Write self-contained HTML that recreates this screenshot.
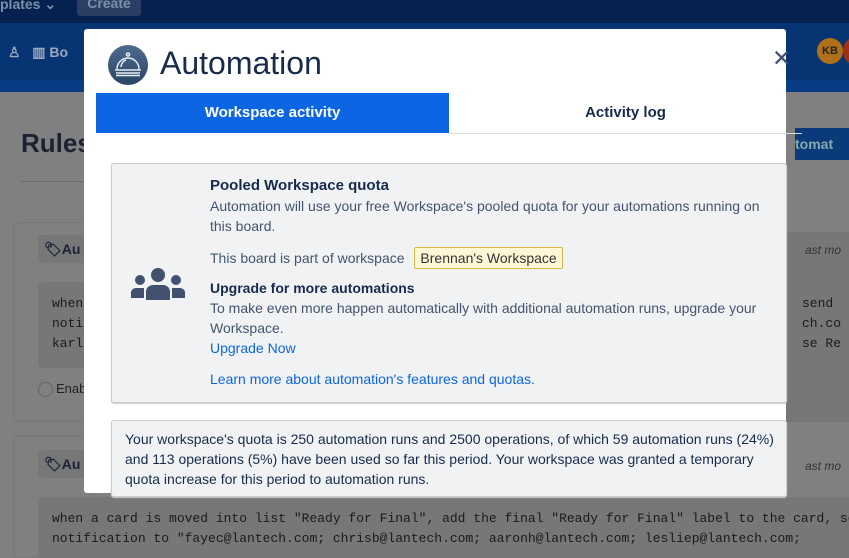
<!DOCTYPE html>
<html style="overflow:hidden"><head><style>
*{box-sizing:border-box;margin:0;padding:0}
html,body{width:849px;height:558px;overflow:hidden}
body{position:relative;background:#808080;font-family:"Liberation Sans",sans-serif}
.abs{position:absolute}
.mono{font-family:"Liberation Mono",monospace;font-size:13px;color:#1a1a1a;line-height:20px}
</style></head><body>
<div class="abs" style="left:0;top:0;width:849px;height:23px;background:#04214f"></div>
<div class="abs" style="left:0;top:-4px;color:#7f8fa8;font-size:14px;font-weight:bold">plates ⌄</div>
<div class="abs" style="left:77px;top:-6px;width:64px;height:22px;background:#2a3f63;border-radius:3px;color:#7f8fa8;font-size:14px;font-weight:bold;text-align:center;line-height:18px">Create</div>
<div class="abs" style="left:0;top:23px;width:849px;height:57px;background:#073472"></div>
<div class="abs" style="left:0;top:80px;width:849px;height:12px;background:#0a3b85"></div>
<div class="abs" style="left:8px;top:44px;color:#9aa8c0;font-size:14px;font-weight:bold">♙ &nbsp; ▥ Bo</div>
<div class="abs" style="left:817px;top:38px;width:26px;height:26px;border-radius:50%;background:#b07018;color:#222;font-size:11px;font-weight:bold;text-align:center;line-height:26px">KB</div>
<div class="abs" style="left:843px;top:38px;width:20px;height:26px;border-radius:50%;background:#a03010"></div>
<div class="abs" style="left:21px;top:128px;font-size:26px;font-weight:bold;color:#1a2233">Rules</div>
<div class="abs" style="left:21px;top:181px;width:70px;height:1px;background:#6a6a6a"></div>
<div class="abs" style="left:795px;top:128px;width:60px;height:32px;background:#0a3a7a;color:#8aa;font-weight:bold;font-size:14px;line-height:32px">tomat</div>
<div class="abs" style="left:13px;top:222px;width:80px;height:200px;border:1px solid #777;border-radius:4px"></div>
<div class="abs" style="left:38px;top:235px;width:60px;height:28px;background:#777;border-radius:4px;color:#1a2233;font-weight:bold;font-size:14px;line-height:28px;padding-left:6px">🏷Au</div>
<div class="abs" style="left:38px;top:282px;width:60px;height:86px;background:#777;border-radius:4px"></div>
<div class="abs mono" style="left:52px;top:294px">when<br>noti<br>karl</div>
<div class="abs" style="left:38px;top:382px;width:15px;height:15px;border:1px solid #666;border-radius:50%"></div>
<div class="abs" style="left:56px;top:381px;font-size:13px;color:#222">Enab</div>
<div class="abs" style="left:13px;top:436px;width:80px;height:122px;border:1px solid #777;border-radius:4px"></div>
<div class="abs" style="left:38px;top:450px;width:60px;height:28px;background:#777;border-radius:4px;color:#1a2233;font-weight:bold;font-size:14px;line-height:28px;padding-left:6px">🏷Au</div>
<div class="abs" style="left:38px;top:497px;width:820px;height:61px;background:#777;border-radius:4px 4px 0 0"></div>
<div class="abs mono" style="left:52px;top:509px;white-space:nowrap">when a card is moved into list "Ready for Final", add the final "Ready for Final" label to the card, se<br>notification to "fayec@lantech.com; chrisb@lantech.com; aaronh@lantech.com; lesliep@lantech.com;</div>
<div class="abs" style="left:785px;top:232px;width:70px;height:190px;background:#777"></div>
<div class="abs" style="left:805px;top:243px;font-size:12px;font-style:italic;color:#333">ast mo</div>
<div class="abs mono" style="left:802px;top:294px">send<br>ch.co<br>se Re</div>
<div class="abs" style="left:805px;top:459px;font-size:12px;font-style:italic;color:#333">ast mo</div>

<div class="abs" style="left:84px;top:29px;width:702px;height:464px;background:#fff;border-radius:3px"></div>
<svg class="abs" style="left:108px;top:45px" width="40" height="40" viewBox="0 0 40 40"><defs><linearGradient id="g" x1="0" y1="0" x2="0" y2="1"><stop offset="0" stop-color="#4c6b8e"/><stop offset="1" stop-color="#2c4566"/></linearGradient></defs><circle cx="20" cy="20" r="20" fill="url(#g)"/><g fill="none" stroke="#e8eef5" stroke-width="1.5"><circle cx="20" cy="9.5" r="1.5"/><path d="M9 24 A11 11 0 0 1 31 24"/><path d="M13 22 A7 8 0 0 1 18 15"/><line x1="7" y1="25" x2="33" y2="25"/><line x1="8" y1="28" x2="32" y2="28"/><line x1="8" y1="30.5" x2="32" y2="30.5"/></g></svg>
<div class="abs" style="left:160px;top:45px;font-size:32px;color:#172b4d">Automation</div>
<div class="abs" style="left:772px;top:45px;font-size:23px;color:#42526e;line-height:26px">✕</div>
<div class="abs" style="left:96px;top:93px;width:353px;height:40px;background:#0c66e4;color:#fff;font-weight:bold;font-size:15px;text-align:center;line-height:40px">Workspace activity</div>
<div class="abs" style="left:449px;top:93px;width:353px;height:40px;color:#172b4d;font-weight:bold;font-size:15px;text-align:center;line-height:40px">Activity log</div>
<div class="abs" style="left:449px;top:133px;width:353px;height:1px;background:#ddd"></div>

<div class="abs" style="left:111px;top:163px;width:676px;height:240px;background:#f1f2f4;border:1px solid #ccc;border-radius:3px;box-shadow:0 1px 1px #ccc"></div>
<svg class="abs" style="left:131px;top:267px" width="54" height="33" viewBox="0 0 54 33"><g fill="#42526e"><circle cx="27" cy="8" r="7"/><path d="M15 33 v-7 a7 7 0 0 1 7-8 h10 a7 7 0 0 1 7 8 v7z"/><circle cx="9" cy="13" r="5"/><path d="M0 31 v-4 a5 5 0 0 1 5-6 h8 v10z"/><circle cx="45" cy="13" r="5"/><path d="M54 31 v-4 a5 5 0 0 0 -5-6 h-8 v10z"/></g></svg>
<div class="abs" style="left:210px;top:176px;width:560px;font-size:14px;line-height:20px;color:#44546f">
<div style="font-weight:bold;color:#172b4d;font-size:15px">Pooled Workspace quota</div>
<div>Automation will use your free Workspace's pooled quota for your automations running on this board.</div>
<div style="margin-top:11px">This board is part of workspace <span style="display:inline-block;margin-left:6px;padding:0 5px;border:1px solid #d8b84a;background:#fff7d6;border-radius:2px;color:#333;line-height:20px">Brennan's Workspace</span></div>
<div style="font-weight:bold;color:#172b4d;margin-top:9px">Upgrade for more automations</div>
<div>To make even more happen automatically with additional automation runs, upgrade your Workspace.</div>
<div style="color:#0c66e4">Upgrade Now</div>
<div style="color:#0c66e4;margin-top:11px">Learn more about automation's features and quotas.</div>
</div>
<div class="abs" style="left:111px;top:420px;width:676px;height:77px;background:#f1f2f4;border:1px solid #ccc;border-radius:3px;box-shadow:0 1px 1px #ccc"></div>
<div class="abs" style="left:125px;top:429px;width:655px;font-size:14px;line-height:20px;color:#172b4d">Your workspace's quota is 250 automation runs and 2500 operations, of which 59 automation runs (24%) and 113 operations (5%) have been used so far this period. Your workspace was granted a temporary quota increase for this period to automation runs.</div>
</body></html>
